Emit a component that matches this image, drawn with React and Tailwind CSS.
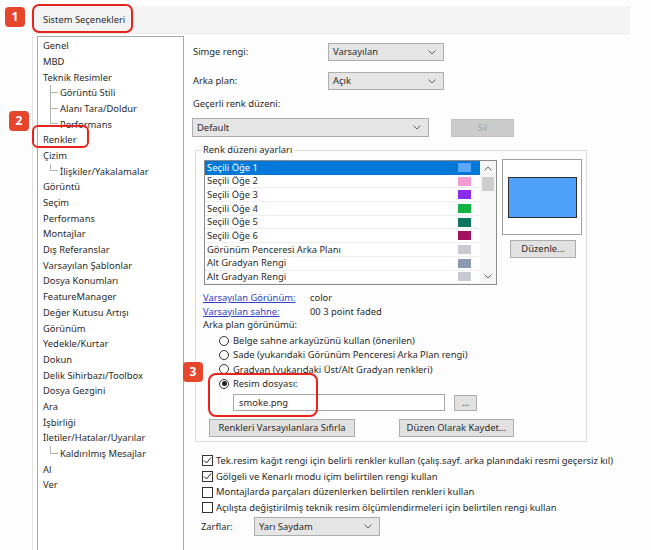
const tree = [
    { t: 'Genel' },
    { t: 'MBD' },
    { t: 'Teknik Resimler' },
    { t: 'Görüntü Stili', child: true },
    { t: 'Alanı Tara/Doldur', child: true },
    { t: 'Performans', child: true, last: true },
    { t: 'Renkler' },
    { t: 'Çizim' },
    { t: 'İlişkiler/Yakalamalar', child: true, last: true },
    { t: 'Görüntü' },
    { t: 'Seçim' },
    { t: 'Performans' },
    { t: 'Montajlar' },
    { t: 'Dış Referanslar' },
    { t: 'Varsayılan Şablonlar' },
    { t: 'Dosya Konumları' },
    { t: 'FeatureManager' },
    { t: 'Değer Kutusu Artışı' },
    { t: 'Görünüm' },
    { t: 'Yedekle/Kurtar' },
    { t: 'Dokun' },
    { t: 'Delik Sihirbazı/Toolbox' },
    { t: 'Dosya Gezgini' },
    { t: 'Ara' },
    { t: 'İşbirliği' },
    { t: 'İletiler/Hatalar/Uyarılar' },
    { t: 'Kaldırılmış Mesajlar', child: true, last: true },
    { t: 'Al' },
    { t: 'Ver' },
];

const renkler = [
    { t: 'Seçili Öğe 1', c: 'bg-[#5aa8f7]', sel: true },
    { t: 'Seçili Öğe 2', c: 'bg-[#f59bd0]' },
    { t: 'Seçili Öğe 3', c: 'bg-[#8a2cf0]' },
    { t: 'Seçili Öğe 4', c: 'bg-[#14b143]' },
    { t: 'Seçili Öğe 5', c: 'bg-[#0f7761]' },
    { t: 'Seçili Öğe 6', c: 'bg-[#a3115f]' },
    { t: 'Görünüm Penceresi Arka Planı', c: 'bg-[#c9c9d1]' },
    { t: 'Alt Gradyan Rengi', c: 'bg-[#8b9ab0]' },
    { t: 'Alt Gradyan Rengi', c: 'bg-[#c9c9d1]' },
];

const radyolar = [
    { t: 'Belge sahne arkayüzünü kullan (önerilen)' },
    { t: 'Sade (yukarıdaki Görünüm Penceresi Arka Plan rengi)' },
    { t: 'Gradyan (yukarıdaki Üst/Alt Gradyan renkleri)' },
    { t: 'Resim dosyası:', on: true },
];

const kutular = [
    { t: 'Tek.resim kağıt rengi için belirli renkler kullan (çalış.sayf. arka planındaki resmi geçersiz kıl)', on: true },
    { t: 'Gölgeli ve Kenarlı modu içim belirtilen rengi kullan', on: true },
    { t: 'Montajlarda parçaları düzenlerken belirtilen renkleri kullan' },
    { t: 'Açılışta değiştirilmiş teknik resim ölçümlendirmeleri için belirtilen rengi kullan' },
];

function Chevron({ className = '' }) {
    return (
        <svg width="8" height="5" viewBox="0 0 8 5" className={className}>
            <path d="M0.5 0.5 L4 4 L7.5 0.5" fill="none" stroke="#606060" strokeWidth="1" />
        </svg>
    );
}

function Secim({ text, w }) {
    return (
        <div className={`flex h-full items-center justify-between border border-[#adadad] bg-[#e5e5e5] pl-[4px] pr-[7px] ${w}`}>
            <span>{text}</span>
            <Chevron />
        </div>
    );
}

function Dugme({ children, w, h = 'h-[18px]' }) {
    return (
        <div className={`flex items-center justify-center border border-[#adadad] bg-[#e1e1e1] ${w} ${h}`}>
            {children}
        </div>
    );
}

function Rozet({ n, pos }) {
    return (
        <div className={`absolute flex h-[20px] w-[20px] items-center justify-center rounded-[4px] bg-[#e6462c] text-[12px] font-bold text-white ${pos}`}>
            {n}
        </div>
    );
}

export default function App() {
    return (
        <div className="relative h-[550px] w-[651px] overflow-hidden bg-[#fdfdfd] font-['Noto_Sans',sans-serif] text-[9.4px] leading-none text-[#2a2a2a]">
            {/* baslik */}
            <div className="h-[36px] pt-[6px]">
                <div className="ml-[32px] flex h-[28px] w-[598px] items-center border-b border-[#ececec] bg-[#f3f3f3] pl-[11px]">
                    Sistem Seçenekleri
                </div>
            </div>

            <div className="flex h-[514px]">
                {/* agac */}
                <div className="ml-[32px] border-l border-[#e2e2e2]">
                    <div className="ml-[4px] h-full w-[147px] border border-b-0 border-[#a9a9a9] bg-white pt-[1px]">
                        {tree.map((r, i) => (
                            <div key={i} className="flex h-[15.7px] items-center">
                                {r.child ? (
                                    <>
                                        <div className="ml-[12px] flex h-full w-[8px] flex-col">
                                            <div className="h-1/2 border-b border-l border-[#b4b4b4]" />
                                            {!r.last && <div className="h-1/2 border-l border-[#b4b4b4]" />}
                                        </div>
                                        <span className="ml-[2px]">{r.t}</span>
                                    </>
                                ) : (
                                    <span className="pl-[5px]">{r.t}</span>
                                )}
                            </div>
                        ))}
                    </div>
                </div>

                {/* sag panel */}
                <div className="flex-1 pl-[9px]">
                    <div className="mt-[7px] flex h-[18px] items-center">
                        <span className="w-[135px]">Simge rengi:</span>
                        <Secim text="Varsayılan" w="w-[116px]" />
                    </div>
                    <div className="mt-[11px] flex h-[18px] items-center">
                        <span className="w-[135px]">Arka plan:</span>
                        <Secim text="Açık" w="w-[116px]" />
                    </div>
                    <div className="mt-[8px] flex h-[12px] items-center">Geçerli renk düzeni:</div>
                    <div className="mt-[8px] ml-[-1px] flex h-[19px] items-center">
                        <Secim text="Default" w="w-[237px]" />
                        <div className="ml-[22px] flex h-[18px] w-[63px] items-center justify-center border border-[#c2c2c2] bg-[#cccccc] text-[#a3a3a3]">
                            Sil
                        </div>
                    </div>

                    <fieldset className="mt-[7px] ml-[2px] w-[392px] border border-[#dcdcdc] pb-[4px]">
                        <legend className="ml-[5px] px-[2px] leading-[12px]">Renk düzeni ayarları</legend>

                        <div className="mt-[4px] ml-[8px] flex">
                            <div className="flex h-[125px] w-[293px] border border-[#8c8c8c] bg-white">
                                <div className="w-[275px]">
                                    {renkler.map((r, i) => (
                                        <div
                                            key={i}
                                            className={`flex h-[13.7px] items-center justify-between pl-[2px] pr-[9px] ${
                                                r.sel ? 'bg-[#0078d7] text-white' : 'border-b border-[#efefef]'
                                            }`}
                                        >
                                            <span>{r.t}</span>
                                            <span className={`h-[9px] w-[13px] ${r.c}`} />
                                        </div>
                                    ))}
                                </div>
                                <div className="flex w-[16px] flex-col items-center bg-[#f6f6f6] pt-[5px] pb-[5px]">
                                    <Chevron className="rotate-180" />
                                    <div className="mt-[6px] h-[14px] w-[12px] bg-[#cdcdcd]" />
                                    <div className="flex-1" />
                                    <Chevron />
                                </div>
                            </div>

                            <div className="ml-[5px] flex flex-col">
                                <div className="mt-[-1px] flex h-[76px] w-[80px] items-center justify-center border border-[#a0a0a0] bg-white">
                                    <div className="h-[41px] w-[69px] border border-[#2d2d2d] bg-[#4fa0fb]" />
                                </div>
                                <div className="mt-[5px] ml-[8px]">
                                    <Dugme w="w-[66px]">Düzenle...</Dugme>
                                </div>
                            </div>
                        </div>

                        <div className="mt-[6px] pl-[7px]">
                            <div className="flex h-[13.5px] items-center">
                                <span className="w-[107px] text-[#3142c4] underline">Varsayılan Görünüm:</span>
                                <span>color</span>
                            </div>
                            <div className="flex h-[13.5px] items-center">
                                <span className="w-[107px] text-[#3142c4] underline">Varsayılan sahne:</span>
                                <span>00 3 point faded</span>
                            </div>
                            <div className="flex h-[13.5px] items-center">Arka plan görünümü:</div>
                        </div>

                        <div className="mt-[2px] pl-[23px]">
                            {radyolar.map((r, i) => (
                                <div key={i} className="flex h-[14.4px] items-center">
                                    <span className="flex h-[10px] w-[10px] items-center justify-center rounded-full border border-[#333] bg-white">
                                        {r.on && <span className="h-[5px] w-[5px] rounded-full bg-[#222]" />}
                                    </span>
                                    <span className="ml-[4px]">{r.t}</span>
                                </div>
                            ))}
                        </div>

                        <div className="mt-[3px] ml-[37px] flex h-[17px] items-center">
                            <div className="flex h-full w-[212px] items-center border border-[#a8a8a8] bg-white pl-[5px]">
                                smoke.png
                            </div>
                            <div className="ml-[9px]">
                                <Dugme w="w-[23px]" h="h-[16px]">...</Dugme>
                            </div>
                        </div>

                        <div className="mt-[8px] flex">
                            <div className="ml-[13px]">
                                <Dugme w="w-[146px]">Renkleri Varsayılanlara Sıfırla</Dugme>
                            </div>
                            <div className="ml-[44px]">
                                <Dugme w="w-[115px]">Düzen Olarak Kaydet...</Dugme>
                            </div>
                        </div>
                    </fieldset>

                    <div className="mt-[11px] pl-[9px]">
                        {kutular.map((k, i) => (
                            <div key={i} className="flex h-[15.6px] items-center">
                                <span className="flex h-[11px] w-[11px] items-center justify-center border border-[#333] bg-white">
                                    {k.on && (
                                        <svg width="9" height="9" viewBox="0 0 9 9">
                                            <path d="M1 4.5 L3.5 7 L8 1.5" fill="none" stroke="#222" strokeWidth="1" />
                                        </svg>
                                    )}
                                </span>
                                <span className="ml-[3px]">{k.t}</span>
                            </div>
                        ))}
                    </div>
                    <div className="mt-[2px] flex h-[19px] items-center pl-[8px]">
                        <span className="w-[53px]">Zarflar:</span>
                        <Secim text="Yarı Saydam" w="w-[126px]" />
                    </div>
                </div>
            </div>

            {/* isaretler */}
            <div className="absolute left-[32px] top-[4px] h-[29px] w-[101px] rounded-[7px] border-[2.5px] border-[#e8231c]" />
            <div className="absolute left-[32px] top-[125px] h-[23px] w-[57px] rounded-[6px] border-[2.5px] border-[#e8231c]" />
            <div className="absolute left-[208px] top-[373px] h-[44px] w-[110px] rounded-[8px] border-[2.5px] border-[#e8231c]" />
            <Rozet n="1" pos="left-[5px] top-[7px]" />
            <Rozet n="2" pos="left-[9px] top-[111px]" />
            <Rozet n="3" pos="left-[183px] top-[362px]" />
        </div>
    );
}
